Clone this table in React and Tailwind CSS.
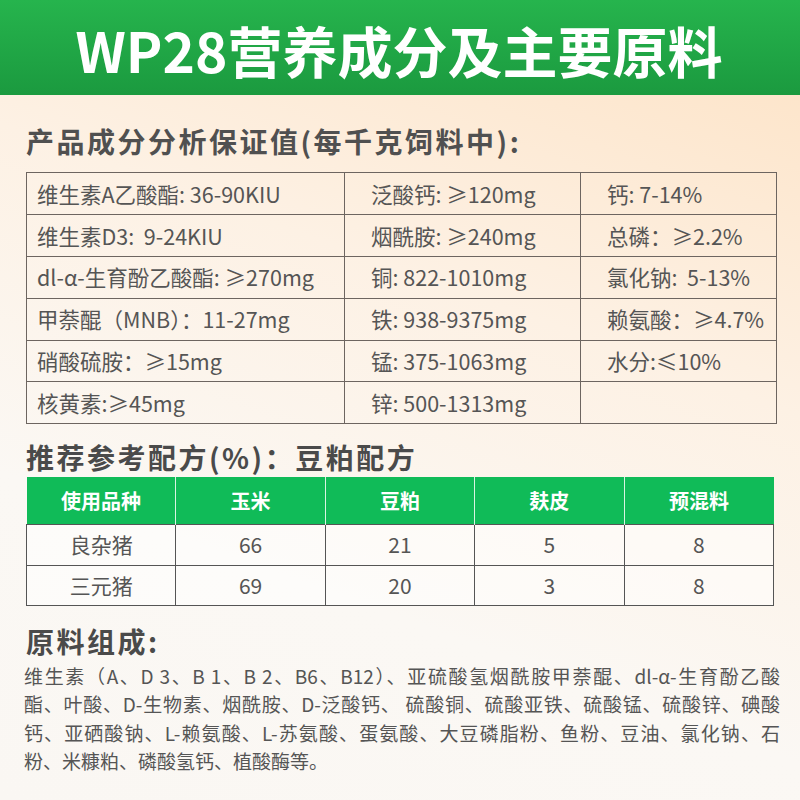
import React from "react";

const FONT = { fontFamily: '"Noto Sans CJK SC", "Noto Sans", sans-serif' };

const guarantee = [
  ["维生素A乙酸酯: 36-90KIU", "泛酸钙: ≥120mg", "钙: 7-14%"],
  ["维生素D3:  9-24KIU", "烟酰胺: ≥240mg", "总磷：≥2.2%"],
  ["dl-α-生育酚乙酸酯: ≥270mg", "铜: 822-1010mg", "氯化钠:  5-13%"],
  ["甲萘醌（MNB）：11-27mg", "铁: 938-9375mg", "赖氨酸：≥4.7%"],
  ["硝酸硫胺：≥15mg", "锰: 375-1063mg", "水分:≤10%"],
  ["核黄素:≥45mg", "锌: 500-1313mg", ""],
];

const formula = [
  ["良杂猪", "66", "21", "5", "8"],
  ["三元猪", "69", "20", "3", "8"],
];

const heads = ["使用品种", "玉米", "豆粕", "麸皮", "预混料"];

// the print layout breaks these lines by hand and justifies them
const materials = [
  "维生素（A、D 3、B 1、B 2、B6、B12）、亚硫酸氢烟酰胺甲萘醌、dl-α-生育酚乙酸",
  "酯、叶酸、D-生物素、烟酰胺、D-泛酸钙、 硫酸铜、硫酸亚铁、硫酸锰、硫酸锌、碘酸",
  "钙、亚硒酸钠、L-赖氨酸、L-苏氨酸、蛋氨酸、大豆磷脂粉、鱼粉、豆油、氯化钠、石",
  "粉、米糠粕、磷酸氢钙、植酸酶等。",
];

export default function App() {
  return (
    <div
      style={FONT}
      className="w-[800px] h-[800px] overflow-hidden bg-[linear-gradient(200deg,#fde2c4_0%,#fdf1e4_38%,#fbf8f4_70%,#faf7f3_100%)]"
    >
      {/* ===== Title band ===== */}
      <div className="h-[95px] flex items-center justify-center bg-gradient-to-b from-[#26b44d] to-[#1b9a3f]">
        <h1 className="text-white font-bold text-[55px] leading-none pt-[4px] -ml-[2px]">
          WP28营养成分及主要原料
        </h1>
      </div>

      <div className="pl-[26px] pr-[23px]">
        {/* ===== Guarantee values ===== */}
        <h2 className="mt-[28px] h-[36px] flex items-center text-[28px] font-bold text-[#505050] tracking-[2.5px] whitespace-nowrap">
          产品成分分析保证值(每千克饲料中):
        </h2>

        <table className="mt-[13px] w-full border-collapse text-[21.5px] text-[#555] table-fixed">
          <colgroup>
            <col className="w-[318px]" />
            <col className="w-[236px]" />
            <col />
          </colgroup>
          <tbody>
            {guarantee.map((row, i) => (
              <tr key={i} className="h-[41.9px]">
                {row.map((cell, j) => (
                  <td
                    key={j}
                    className={`border border-[#6d6560] whitespace-pre leading-none ${
                      j === 0 ? "pl-[10px]" : "pl-[26px]"
                    }`}
                  >
                    {cell}
                  </td>
                ))}
              </tr>
            ))}
          </tbody>
        </table>

        {/* ===== Recommended formula ===== */}
        <h2 className="mt-[15px] h-[36px] flex items-center text-[28px] font-bold text-[#4a4a4a] tracking-[2.5px] whitespace-nowrap">
          推荐参考配方(%)：豆粕配方
        </h2>

        <table className="mt-[2px] w-[748px] border-collapse table-fixed text-center">
          <thead>
            <tr className="h-[47px] bg-[#10bb58]">
              {heads.map((h, i) => (
                <th
                  key={i}
                  className={`text-white font-bold text-[20px] ${
                    i > 0 ? "border-l border-[#d9f3e2]" : ""
                  }`}
                >
                  {h}
                </th>
              ))}
            </tr>
          </thead>
          <tbody>
            {formula.map((row, i) => (
              <tr key={i} className={i === 0 ? "h-[41px]" : "h-[40px]"}>
                {row.map((c, j) => (
                  <td
                    key={j}
                    className="border border-[#555] bg-white/50 text-[21px] text-[#555] leading-none"
                  >
                    {c}
                  </td>
                ))}
              </tr>
            ))}
          </tbody>
        </table>

        {/* ===== Raw materials ===== */}
        <h2 className="mt-[17px] h-[36px] flex items-center text-[28px] font-bold text-[#4a4a4a] tracking-[2.5px]">
          原料组成:
        </h2>
        <div className="mt-[3px] w-[756px] -ml-[2px] text-[19px] leading-[28.5px] text-[#555]">
          {materials.map((line, i) => (
            <div
              key={i}
              className={
                i < materials.length - 1
                  ? "whitespace-nowrap text-justify [text-align-last:justify]"
                  : "whitespace-nowrap"
              }
            >
              {line}
            </div>
          ))}
        </div>
      </div>
    </div>
  );
}
